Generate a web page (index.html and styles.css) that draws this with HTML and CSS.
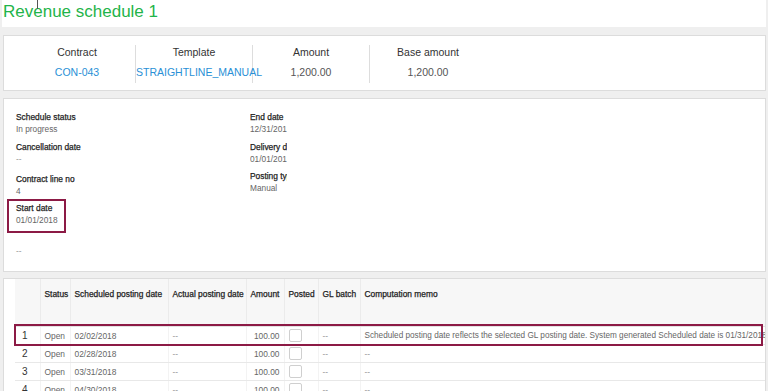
FILE: index.html
```html
<!DOCTYPE html>
<html lang="en">
<head>
    <meta charset="UTF-8">
    <meta name="viewport" content="width=device-width, initial-scale=1.0">
    <title>Revenue schedule 1</title>
    <link rel="stylesheet" href="styles.css">
</head>
<body>
    <div class="page">
        <header class="title-bar">
            <h1>Revenue schedule 1</h1>
            <span class="cursor"></span>
        </header>

        <section class="card summary">
            <div class="summary-col">
                <div class="summary-label">Contract</div>
                <div class="summary-value link">CON-043</div>
            </div>
            <div class="summary-col">
                <div class="summary-label">Template</div>
                <div class="summary-value link">STRAIGHTLINE_MANUAL</div>
            </div>
            <div class="summary-col">
                <div class="summary-label">Amount</div>
                <div class="summary-value">1,200.00</div>
            </div>
            <div class="summary-col">
                <div class="summary-label">Base amount</div>
                <div class="summary-value">1,200.00</div>
            </div>
        </section>

        <section class="card details">
            <div class="details-left">
                <div class="field">
                    <div class="field-label">Schedule status</div>
                    <div class="field-value">In progress</div>
                </div>
                <div class="field gap-wide">
                    <div class="field-label">Cancellation date</div>
                    <div class="field-value muted">--</div>
                </div>
                <div class="field gap-tight">
                    <div class="field-label">Contract line no</div>
                    <div class="field-value">4</div>
                </div>
                <div class="field highlight">
                    <div class="field-label">Start date</div>
                    <div class="field-value">01/01/2018</div>
                </div>
                <div class="field loose">
                    <div class="field-value muted">--</div>
                </div>
            </div>
            <div class="details-right">
                <div class="field">
                    <div class="field-label">End date</div>
                    <div class="field-value">12/31/2018</div>
                </div>
                <div class="field gap-small">
                    <div class="field-label">Delivery date</div>
                    <div class="field-value">01/01/2018</div>
                </div>
                <div class="field">
                    <div class="field-label">Posting type</div>
                    <div class="field-value">Manual</div>
                </div>
            </div>
        </section>

        <section class="card schedule">
            <table class="schedule-table">
                <colgroup>
                    <col style="width: 25px">
                    <col style="width: 30px">
                    <col style="width: 98px">
                    <col style="width: 78px">
                    <col style="width: 38px">
                    <col style="width: 34px">
                    <col style="width: 42px">
                    <col>
                </colgroup>
                <thead>
                    <tr>
                        <th></th>
                        <th>Status</th>
                        <th>Scheduled posting date</th>
                        <th>Actual posting date</th>
                        <th>Amount</th>
                        <th>Posted</th>
                        <th>GL batch</th>
                        <th>Computation memo</th>
                    </tr>
                </thead>
                <tbody>
                    <tr>
                        <td class="num">1</td>
                        <td>Open</td>
                        <td>02/02/2018</td>
                        <td class="muted">--</td>
                        <td class="amount">100.00</td>
                        <td><span class="checkbox"></span></td>
                        <td class="muted">--</td>
                        <td class="memo">Scheduled posting date reflects the selected GL posting date. System generated Scheduled date is 01/31/2018</td>
                    </tr>
                    <tr>
                        <td class="num">2</td>
                        <td>Open</td>
                        <td>02/28/2018</td>
                        <td class="muted">--</td>
                        <td class="amount">100.00</td>
                        <td><span class="checkbox"></span></td>
                        <td class="muted">--</td>
                        <td class="muted">--</td>
                    </tr>
                    <tr>
                        <td class="num">3</td>
                        <td>Open</td>
                        <td>03/31/2018</td>
                        <td class="muted">--</td>
                        <td class="amount">100.00</td>
                        <td><span class="checkbox"></span></td>
                        <td class="muted">--</td>
                        <td class="muted">--</td>
                    </tr>
                    <tr>
                        <td class="num">4</td>
                        <td>Open</td>
                        <td>04/30/2018</td>
                        <td class="muted">--</td>
                        <td class="amount">100.00</td>
                        <td><span class="checkbox"></span></td>
                        <td class="muted">--</td>
                        <td class="muted">--</td>
                    </tr>
                </tbody>
            </table>
            <div class="row-highlight"></div>
        </section>
    </div>
</body>
</html>
```

FILE: styles.css
```css
body {
    margin: 0;
    background: #efefef;
    font-family: "Liberation Sans", Arial, sans-serif;
    color: #333;
    overflow: hidden;
}

.page {
    padding: 0 2px 0 2px;
}

/* title */
.title-bar {
    position: relative;
    background: #fff;
    height: 27px;
    box-sizing: border-box;
    padding: 2px 0 0 1px;
}

.title-bar h1 {
    margin: 0;
    font-size: 17px;
    font-weight: normal;
    line-height: 19px;
    color: #1fb44a;
}

.cursor {
    position: absolute;
    left: 35px;
    top: 0;
    width: 1px;
    height: 9px;
    background: #555;
}

.card {
    background: #fff;
    border: 1px solid #dcdcdc;
    margin-left: 1px;
}

/* summary strip */
.summary {
    margin-top: 8px;
    height: 56px;
    box-sizing: border-box;
    padding: 9px 0 0 15px;
    display: flex;
}

.summary-col {
    width: 116px;
    height: 38px;
    border-right: 1px solid #ddd;
    text-align: center;
    white-space: nowrap;
}

.summary-col:last-child {
    border-right: none;
}

.summary-label {
    font-size: 10.5px;
    line-height: 14px;
    color: #333;
}

.summary-value {
    font-size: 10.5px;
    line-height: 14px;
    margin-top: 6px;
    color: #555;
}

.summary-value.link {
    color: #2990d6;
}

/* details */
.details {
    margin-top: 7px;
    height: 174px;
    box-sizing: border-box;
    padding: 12px 0 0 3px;
    display: flex;
}

.details-left {
    width: 243px;
}

.details-right {
    width: 37px;
    overflow: hidden;
    white-space: nowrap;
}

.field {
    padding-left: 9px;
    margin-bottom: 6px;
}

.details-right .field {
    padding-left: 0;
}

.field.gap-wide {
    margin-bottom: 8px;
}

.field.gap-tight {
    margin-bottom: 2px;
}

.field.gap-small {
    margin-bottom: 5px;
}

.field-label {
    font-size: 8.4px;
    line-height: 12px;
    color: #1e1e1e;
    -webkit-text-stroke: 0.25px #1e1e1e;
}

.field-value {
    font-size: 8.3px;
    line-height: 12px;
    color: #666;
}

.field-value.muted {
    color: #999;
}

.field.highlight {
    width: 59px;
    box-sizing: border-box;
    border: 2px solid #8c1a45;
    padding: 1px 0 5px 7px;
    margin-bottom: 0;
}

.field.loose {
    margin-top: 12px;
}

/* schedule table */
.schedule {
    position: relative;
    margin-top: 6px;
    padding-left: 11px;
    height: 140px;
}

.schedule-table {
    width: 100%;
    table-layout: fixed;
    border-collapse: collapse;
    white-space: nowrap;
}

.schedule-table th {
    height: 38px;
    padding: 9px 4px 0;
    vertical-align: top;
    text-align: left;
    font-size: 8.4px;
    line-height: 12px;
    font-weight: normal;
    color: #222;
    -webkit-text-stroke: 0.25px #222;
    background: #f7f7f7;
    border-right: 1px solid #ebebeb;
    border-bottom: 1px solid #e2e2e2;
    overflow: hidden;
}

.schedule-table th:last-child {
    border-right: none;
}

.schedule-table td {
    height: 17px;
    padding: 0 4px;
    font-size: 8.4px;
    line-height: 12px;
    color: #666;
    border-bottom: 1px solid #e8e8e8;
    border-right: 1px solid #f3f3f3;
    overflow: hidden;
}

.schedule-table td:last-child {
    border-right: none;
}

.schedule-table td.num {
    padding-left: 7px;
    font-size: 10px;
    color: #333;
}

.schedule-table td.amount {
    text-align: right;
}

.schedule-table td.memo {
    font-size: 8.2px;
}

.schedule-table td.muted {
    color: #999;
}

.checkbox {
    display: block;
    width: 11px;
    height: 11px;
    border: 1px solid #cfcfcf;
    border-radius: 2px;
    background: #fff;
}

.row-highlight {
    position: absolute;
    left: 10px;
    top: 45px;
    width: 749px;
    height: 22px;
    box-sizing: border-box;
    border: 2px solid #8c1a45;
}
```
